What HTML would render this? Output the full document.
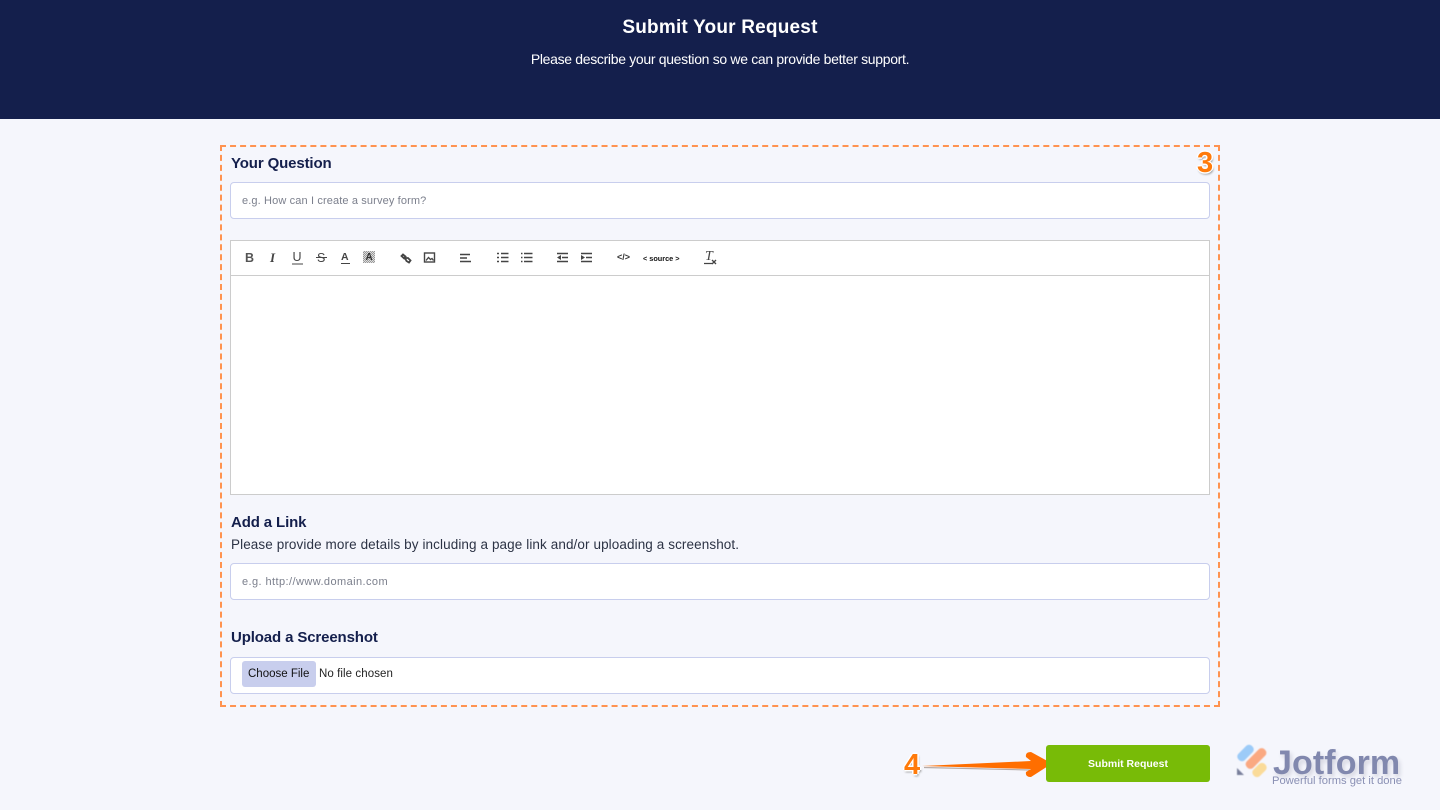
<!DOCTYPE html>
<html><head><meta charset="utf-8"><style>
*{box-sizing:border-box}
html,body{margin:0;padding:0}
body{width:1440px;height:810px;background:#f5f6fc;position:relative;overflow:hidden;font-family:"Liberation Sans",sans-serif}
.t{position:absolute;white-space:nowrap;line-height:1}
.hd{position:absolute;left:0;top:0;width:1440px;height:119px;background:#141f4c}
.lb{color:#141f4c;font-weight:bold;font-size:15px;letter-spacing:-.13px}
.inp{position:absolute;left:230px;width:980px;height:37px;background:#fff;border:1px solid #c8ceed;border-radius:4px}
.ph{color:#7b7f8c;font-size:11px}
svg{position:absolute;left:0;top:0}
</style></head><body>
<div class="hd"></div>
<div class="t" style="left:0;width:1440px;text-align:center;top:18px;color:#fff;font-weight:bold;font-size:19px;letter-spacing:.2px">Submit Your Request</div>
<div class="t" style="left:0;width:1440px;text-align:center;top:52px;color:#fff;font-size:14px;letter-spacing:-.32px">Please describe your question so we can provide better support.</div>

<div style="position:absolute;left:220px;top:145px;width:1000px;height:562px;border:2px dashed #ff9350"></div>

<div class="t lb" style="left:231px;top:156px">Your Question</div>
<div class="inp" style="top:182px"></div>
<div class="t ph" style="left:242px;top:196px;letter-spacing:.13px">e.g. How can I create a survey form?</div>

<div style="position:absolute;left:230px;top:240px;width:980px;height:255px;background:#fff;border:1px solid #ccc"></div>
<div style="position:absolute;left:230px;top:275px;width:980px;height:1px;background:#ccc"></div>

<div class="t" style="left:245px;top:252px;font-size:12.500px;font-weight:bold;color:#555">B</div>
<div class="t" style="left:270px;top:251px;font-size:13px;font-style:italic;color:#444;font-family:'Liberation Serif',serif;font-weight:bold">I</div>
<div class="t" style="left:292.500px;top:251px;font-size:12.500px;color:#444">U</div>
<div class="t" style="left:317px;top:252px;font-size:12.500px;color:#444">S</div>
<div class="t" style="left:341px;top:252px;font-size:10.500px;font-weight:bold;color:#444">A</div>
<div style="position:absolute;left:363px;top:251px;width:12px;height:12px;background:repeating-conic-gradient(#999 0 25%,#ddd 0 50%) 0 0/2px 2px"></div>
<div class="t" style="left:365.500px;top:252.500px;font-size:10px;font-weight:bold;color:#333">A</div>
<div class="t" style="left:643px;top:255px;font-size:7.300px;font-weight:bold;color:#111">&lt; source &gt;</div>
<div class="t" style="left:617px;top:253px;font-size:9px;font-weight:bold;color:#333">&lt;/&gt;</div>
<div class="t" style="left:705px;top:250px;font-size:14px;font-style:italic;color:#444;font-family:'Liberation Serif',serif">T</div>

<svg width="1440" height="810" viewBox="0 0 1440 810" fill="none">
<g stroke="#444" stroke-width="1">
<path d="M292 264h11M341 263.500h9M316 257.500h11"/>
<path d="M401.500 256l1.500-1.500 2.500 2-1.500 1.800-2.500-2.300zM406 258l2 0 2.500 2.500-1.500 2-2.500-1.500-1.500-3z" stroke-width="1.800"/>
<rect x="424.500" y="253" width="10" height="9" stroke-width="1.400"/>
<path d="M426 260.500l2.500-3 2 2 1.500-1 1.500 2" stroke-width="1.300"/>
<path d="M460 254.500h10M460 258h7M460 261.500h11" stroke-width="1.400"/>
<path d="M501 253.500h7.500M501 257.500h7.500M501 261.500h7.500M497 253.500h2M497 257.500h2M497 261.500h2" stroke-width="1.400"/>
<path d="M524 253.500h8.500M524 257.500h8.500M524 261.500h8.500M521 253.500h1.500M521 257.500h1.500M521 261.500h1.500" stroke-width="1.400"/>
<path d="M557 253.500h11M562 257.500h6M557 261.500h11M581 253.500h11M581 261.500h11M586 257.500h6" stroke-width="1.400"/>
<path d="M561 255l-4 2.500 4 2.500zM581 255l4 2.500-4 2.500z" fill="#444" stroke="none"/>
<path d="M704 263.500h9M712 260l4 4M716 260l-4 4" stroke-width="1.300"/>
</g>
<path d="M924 767.500L1030 770" stroke="#8a7a70" stroke-width="1.200" opacity=".6"/>
<path d="M922 766L1031 761L1026 757Q1025 752 1031 752L1052 763.500L1031 777Q1025 777 1026 772L1031 769Z" fill="#ff6e00"/>
<g opacity=".55" style="filter:blur(.4px)">
<rect x="-4.500" y="-9.500" width="9" height="19" rx="4" transform="translate(1245.500 753) rotate(45)" fill="#54a8f5"/>
<rect x="-4.500" y="-12.500" width="9" height="25" rx="4" transform="translate(1256 758.500) rotate(45)" fill="#ff6b20"/>
<rect x="-4.500" y="-8" width="9" height="16" rx="4" transform="translate(1259.500 770) rotate(45)" fill="#ffc54a"/>
<path d="M1237 768v7h7z" fill="#141f4c"/>
</g>
</svg>

<div class="t" style="left:1197px;top:149px;font-size:29px;font-weight:bold;color:#ff7a0a;text-shadow:-1.500px 0 #fff,1.500px 0 #fff,0 -1.500px #fff,0 1.500px #fff,1px 2px 2px #888">3</div>
<div class="t" style="left:904px;top:751px;font-size:29px;font-weight:bold;color:#ff7a0a;text-shadow:-1.500px 0 #fff,1.500px 0 #fff,0 -1.500px #fff,0 1.500px #fff,1px 2px 2px #888">4</div>

<div class="t lb" style="left:231px;top:515px">Add a Link</div>
<div class="t" style="left:231px;top:538px;font-size:13.500px;color:#2c3345;letter-spacing:.1px">Please provide more details by including a page link and/or uploading a screenshot.</div>
<div class="inp" style="top:563px"></div>
<div class="t ph" style="left:242px;top:577px;letter-spacing:.42px">e.g. http://www.domain.com</div>

<div class="t lb" style="left:231px;top:630px">Upload a Screenshot</div>
<div class="inp" style="top:657px"></div>
<div style="position:absolute;left:242px;top:661px;width:74px;height:26px;background:#c8ceed;border-radius:3px"></div>
<div class="t" style="left:248px;top:669px;font-size:11.500px;color:#111;">Choose File</div>
<div class="t" style="left:319px;top:669px;font-size:11.500px;color:#222;letter-spacing:.08px">No file chosen</div>

<div style="position:absolute;left:1046px;top:745px;width:164px;height:37px;background:#78bb07;border-radius:3px"></div>
<div class="t" style="left:1046px;width:164px;text-align:center;top:759px;font-size:10.500px;font-weight:bold;color:#fff">Submit Request</div>

<div class="t" style="left:1273px;top:746px;font-size:34px;font-weight:bold;color:#8188ae;letter-spacing:.1px;text-shadow:2px 3px 4px rgba(80,80,110,.2)">Jotform</div>
<div class="t" style="left:1272px;top:775.500px;font-size:11.200px;color:#8a90b4">Powerful forms get it done</div>
</body></html>
